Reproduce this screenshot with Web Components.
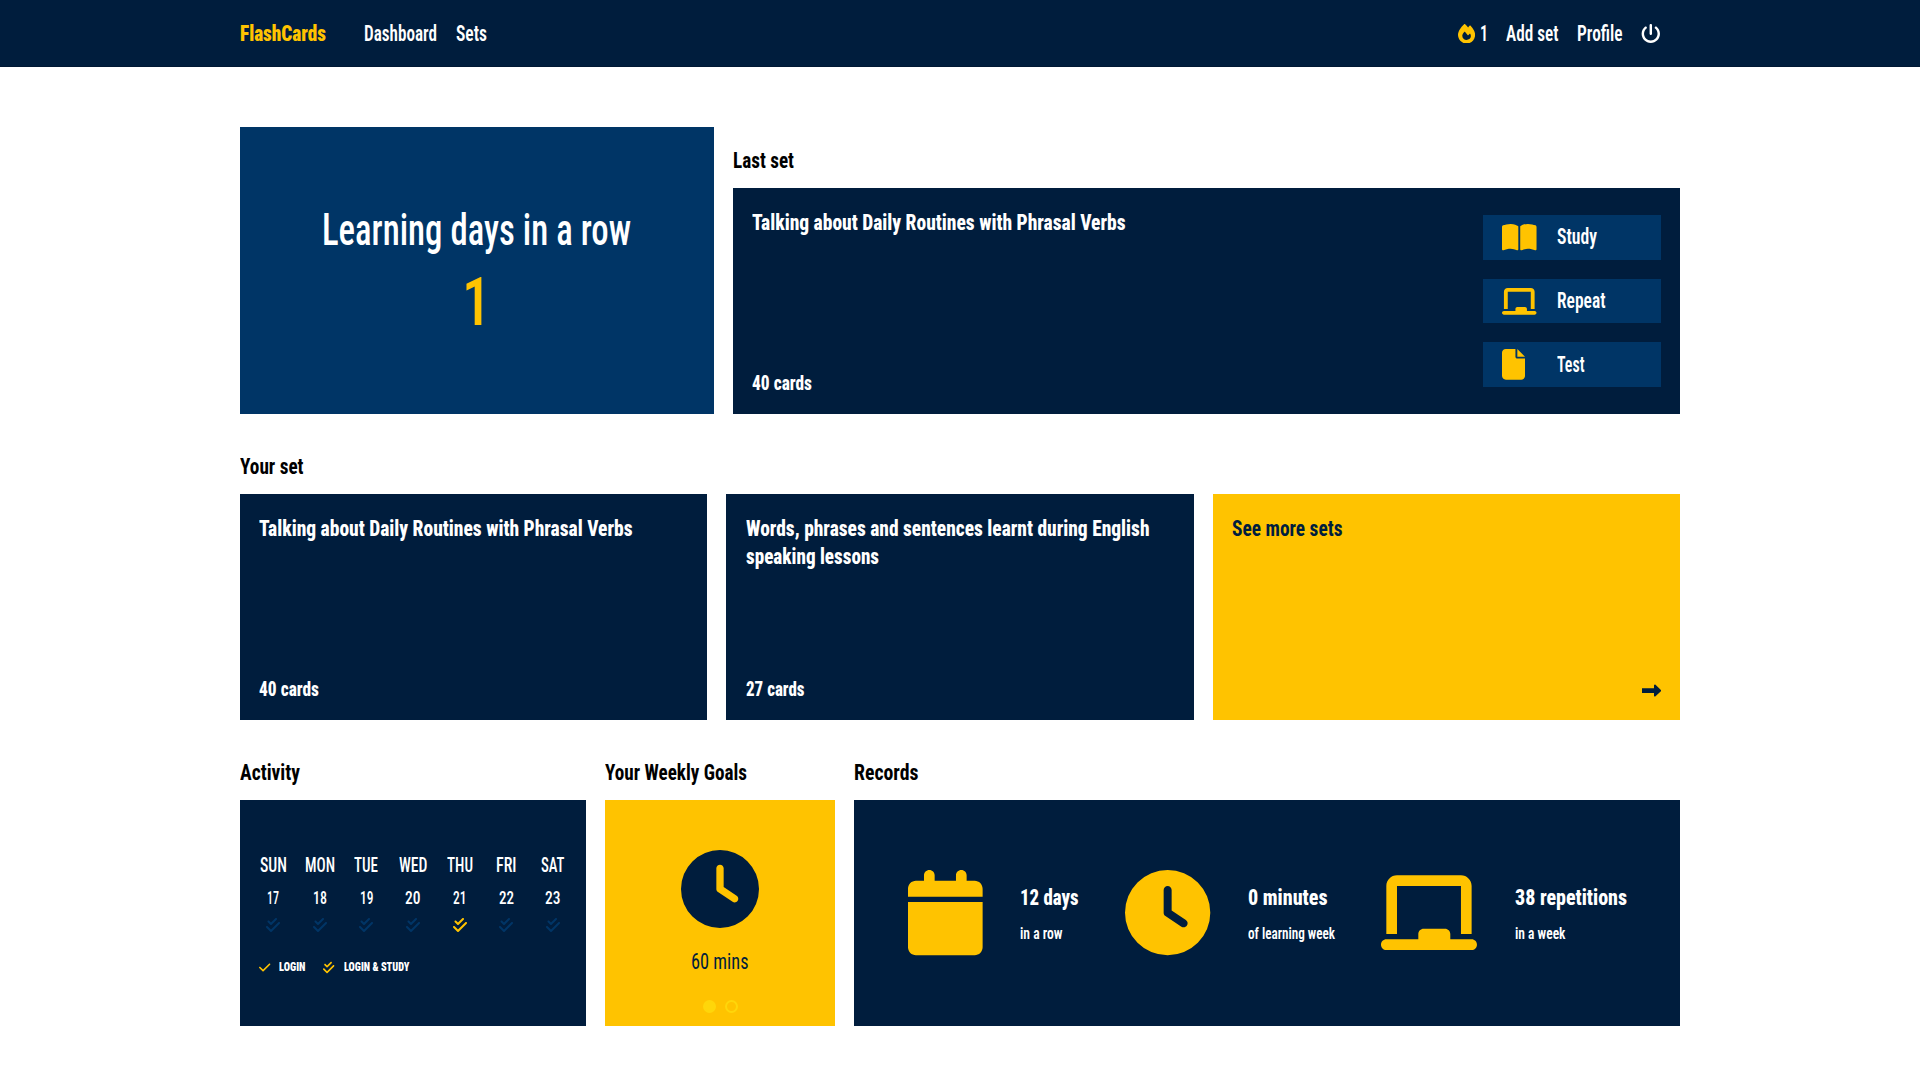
<!DOCTYPE html>
<html lang="en">
<head>
<meta charset="utf-8">
<title>FlashCards</title>
<style>
:root { --navy: #001d3d; --blue: #003566; --gold: #ffc300; --lemon: #ffd60a; }
body { margin: 0; background: #fff; color: #000; font-family: Roboto, "Liberation Sans Narrow", "Liberation Sans", sans-serif; font-stretch: 75%; }
</style>
</head>
<body>
<flash-app></flash-app>
<script>
const ICONS = {
  book: [576, "M249.6 471.5c10.8 3.8 22.4-4.1 22.4-15.5V78.6c0-4.2-1.6-8.4-5-11C247.4 52 202.4 32 144 32C93.5 32 46.3 45.3 18.1 56.1C6.8 60.5 0 71.7 0 83.8V454.1c0 11.9 12.8 20.2 24.1 16.5C55.6 460.1 105.5 448 144 448c33.9 0 79 14 105.6 23.5zm76.8 0C353 462 398.1 448 432 448c38.5 0 88.4 12.1 119.9 22.6c11.3 3.8 24.1-4.6 24.1-16.5V83.8c0-12.1-6.8-23.3-18.1-27.6C529.7 45.3 482.5 32 432 32c-58.4 0-103.4 20-123 35.6c-3.3 2.6-5 6.8-5 11V456c0 11.4 11.7 19.3 22.4 15.5z"],
  board: [576, "M96 32C60.7 32 32 60.7 32 96V384H96V96H480V384h64V96c0-35.3-28.7-64-64-64H96zM224 384v32H32c-17.7 0-32 14.3-32 32s14.3 32 32 32H544c17.7 0 32-14.3 32-32s-14.3-32-32-32H416V384c0-17.7-14.3-32-32-32H256c-17.7 0-32 14.3-32 32z"],
  file: [384, "M0 64C0 28.7 28.7 0 64 0H224V128c0 17.7 14.3 32 32 32H384V448c0 35.3-28.7 64-64 64H64c-35.3 0-64-28.7-64-64V64zm384 64H256V0L384 128z"],
  calendar: [448, "M96 32V64H48C21.5 64 0 85.5 0 112v48H448V112c0-26.5-21.5-48-48-48H352V32c0-17.7-14.3-32-32-32s-32 14.3-32 32V64H160V32c0-17.7-14.3-32-32-32S96 14.3 96 32zM448 192H0V464c0 26.5 21.5 48 48 48H400c26.5 0 48-21.5 48-48V192z"],
  clock: [512, "M256 0a256 256 0 1 1 0 512A256 256 0 1 1 256 0zM232 120V256c0 8 4 15.5 10.7 20l96 64c11 7.4 25.9 4.4 33.3-6.7s4.4-25.9-6.7-33.3L280 243.2V120c0-13.3-10.7-24-24-24s-24 10.7-24 24z"],
  arrow: [512, "M334.5 414c8.8 3.8 19 2 26-4.6l144-136c4.8-4.5 7.5-10.8 7.5-17.4s-2.7-12.9-7.5-17.4l-144-136c-7-6.6-17.2-8.4-26-4.6s-14.5 12.5-14.5 22l0 72H0V320H320l0 72c0 9.6 5.7 18.2 14.5 22z"],
  power: [512, "M288 32c0-17.7-14.3-32-32-32s-32 14.3-32 32V256c0 17.7 14.3 32 32 32s32-14.3 32-32V32zM143.5 120.6c13.6-11.3 15.4-31.5 4.1-45.1s-31.5-15.4-45.1-4.1C49.7 115.4 16 181.8 16 256c0 132.5 107.5 240 240 240s240-107.5 240-240c0-74.2-33.8-140.6-86.6-184.6c-13.6-11.3-33.8-9.4-45.1 4.1s-9.4 33.8 4.1 45.1c38.9 32.3 63.5 81 63.5 135.4c0 97.2-78.8 176-176 176s-176-78.8-176-176c0-54.4 24.7-103.1 63.5-135.4z"],
  check: [448, "M438.6 105.4c12.5 12.5 12.5 32.8 0 45.3l-256 256c-12.5 12.5-32.8 12.5-45.3 0l-128-128c-12.5-12.5-12.5-32.8 0-45.3s32.8-12.5 45.3 0L160 338.7 393.4 105.4c12.5-12.5 32.8-12.5 45.3 0z"],
  checks: [448, "M342.6 86.6c12.5-12.5 12.5-32.8 0-45.3s-32.8-12.5-45.3 0L160 178.7l-57.4-57.4c-12.5-12.5-32.8-12.5-45.3 0s-12.5 32.8 0 45.3l80 80c12.5 12.5 32.8 12.5 45.3 0l160-160zm96 128c12.5-12.5 12.5-32.8 0-45.3s-32.8-12.5-45.3 0L160 402.7 54.6 297.4c-12.5-12.5-32.8-12.5-45.3 0s-12.5 32.8 0 45.3l128 128c12.5 12.5 32.8 12.5 45.3 0l256-256z"],
  fire: [448, "M159.3 5.4c7.8-7.3 19.9-7.2 27.7 .1c27.6 25.9 53.5 53.8 77.7 84c11-14.4 23.5-30.1 37-42.9c7.9-7.4 20.1-7.4 28 .1c34.6 33 63.9 76.6 84.5 118c20.3 40.8 33.8 82.5 33.8 111.9C448 404.2 348.2 512 224 512C98.4 512 0 404.1 0 276.5c0-38.4 17.8-85.3 45.4-131.7C73.3 97.7 112.7 48.6 159.3 5.4zM225.7 416c25.3 0 47.7-7 68.8-21c42.1-29.4 53.4-88.2 28.1-134.4c-4.5-9-16-9.6-22.5-2l-25.2 29.3c-6.6 7.6-18.5 7.4-24.7-.5c-16.5-21-46-58.5-62.8-79.8c-6.3-8-18.3-8.1-24.7-.1c-33.8 42.5-50.8 69.3-50.8 99.4C112 375.4 162.6 416 225.7 416z"]
};

function define(name, html, ready) {
  const tpl = document.createElement("template");
  tpl.innerHTML = html;
  customElements.define(name, class extends HTMLElement {
    connectedCallback() {
      if (this.shadowRoot) return;
      this.attachShadow({ mode: "open" }).append(tpl.content.cloneNode(true));
      if (ready) ready(this, this.shadowRoot);
    }
  });
}

// Icon: name = glyph, size = glyph height in px.
define("ui-icon", `<style>:host{display:block;flex:none;line-height:0}svg{display:block;fill:currentColor}</style><svg><path/></svg>`, (el, root) => {
  const [w, d] = ICONS[el.getAttribute("name")], size = +el.getAttribute("size"), svg = root.querySelector("svg");
  svg.setAttribute("viewBox", `0 0 ${w} 512`);
  svg.setAttribute("width", size * w / 512);
  svg.setAttribute("height", size);
  svg.firstElementChild.setAttribute("d", d);
});

// Condensed one-line label: the text is narrowed to the width w.
define("ui-text", `<style>
:host{display:block;flex:none;height:28px;line-height:28px;white-space:nowrap;font-size:22.6px}
span{display:inline-block;transform-origin:0 50%}
</style><span><slot></slot></span>`, (el, root) => {
  const w = +el.getAttribute("w"), span = root.querySelector("span");
  const size = el.getAttribute("size"), lh = el.getAttribute("lh"), weight = el.getAttribute("weight");
  if (size) el.style.fontSize = size + "px";
  if (lh) el.style.height = el.style.lineHeight = lh + "px";
  if (weight) el.style.fontWeight = weight;
  el.style.width = w + "px";
  span.style.transform = `scaleX(${w / span.getBoundingClientRect().width})`;
});

define("nav-bar", `<style>
:host{display:block;background:var(--navy);color:#fff;height:66px;border-bottom:1px solid #001733}
nav{width:1440px;height:66px;margin:auto;display:flex;align-items:center;justify-content:space-between;box-sizing:border-box;padding-top:1px}
div{display:flex;align-items:center}
.links{gap:19px}.brand{color:var(--gold);margin-right:18.5px}
.streak{gap:4.5px}.streak ui-icon{color:var(--gold)}
.right{gap:18.5px;padding-right:19.2px}
</style>
<nav>
<div class="links"><ui-text class="brand" w="86" weight="900">FlashCards</ui-text><ui-text w="73" weight="600">Dashboard</ui-text><ui-text w="31" weight="600">Sets</ui-text></div>
<div class="links right"><div class="streak"><ui-icon name="fire" size="19.6"></ui-icon><ui-text w="8" weight="600">1</ui-text></div><ui-text w="52.5" weight="600">Add set</ui-text><ui-text w="45.5" weight="600">Profile</ui-text><ui-icon name="power" size="19.6"></ui-icon></div>
</nav>`);

define("panel-section", `<style>
:host{display:flex;flex-direction:column}
header{height:55px;display:flex;align-items:center;color:#000}
.card{height:226px;box-sizing:border-box;display:flex;background:var(--bg,var(--navy));color:var(--fg,#fff)}
</style><header><slot name="title"></slot></header><div class="card"><slot></slot></div>`);

define("set-card", `<style>
:host{display:flex;flex:1;flex-direction:column;justify-content:space-between;box-sizing:border-box;height:226px;padding:21px 19.2px 17px;background:var(--bg,var(--navy));color:var(--fg,#fff)}
.foot{display:flex;flex-direction:column}
</style><div><slot></slot></div><div class="foot"><slot name="foot"></slot></div>`);

define("action-button", `<style>
:host{display:flex;align-items:center;box-sizing:border-box;width:178px;height:44.5px;padding-left:19.2px;background:var(--blue);color:#fff}
.i{width:55.4px;color:var(--gold)}
</style><div class="i"></div><slot></slot>`, (el, root) => {
  root.querySelector(".i").innerHTML = `<ui-icon name="${el.getAttribute("icon")}" size="30.7"></ui-icon>`;
});

define("streak-card", `<style>
:host{display:flex;flex-direction:column;align-items:center;justify-content:center;box-sizing:border-box;width:473.6px;height:287px;padding-top:3px;background:var(--blue);color:#fff}
.n{color:var(--gold)}
</style><ui-text w="309" size="45" lh="59" weight="500">Learning days in a row</ui-text><ui-text class="n" w="29" size="67" lh="86" weight="500">1</ui-text>`);

define("activity-week", `<style>
:host{display:block;width:346px;box-sizing:border-box;padding:51px 10px 0}
.days{display:grid;grid-template-columns:repeat(7,46.6px);justify-items:center}
.n{margin-top:7px}.c{margin-top:7px;color:#003566}.on{color:var(--gold)}
.legend{display:flex;align-items:center;height:16px;margin:26px 0 0 9.3px}
.legend ui-icon{color:var(--gold)}.legend ui-text{margin:0 17.5px 0 8.8px}
</style><div class="days"></div>
<div class="legend"><ui-icon name="check" size="13"></ui-icon><ui-text w="26.5" size="12.6" lh="16" weight="900">LOGIN</ui-text><ui-icon name="checks" size="13"></ui-icon><ui-text w="65.5" size="12.6" lh="16" weight="900">LOGIN &amp; STUDY</ui-text></div>`, (el, root) => {
  const days = [["SUN", 27, 17, 12], ["MON", 30, 18, 14], ["TUE", 24, 19, 13.5], ["WED", 28.5, 20, 15.5], ["THU", 26, 21, 13.5], ["FRI", 20.5, 22, 15], ["SAT", 23.5, 23, 15.5]];
  root.querySelector(".days").innerHTML =
    days.map(d => `<ui-text w="${d[1]}" size="20.5" weight="500">${d[0]}</ui-text>`).join("") +
    days.map(d => `<ui-text class="n" w="${d[3]}" size="17.5" lh="24" weight="500">${d[2]}</ui-text>`).join("") +
    days.map(d => `<ui-icon class="c${d[2] === 21 ? " on" : ""}" name="checks" size="16"></ui-icon>`).join("");
});

define("weekly-goal", `<style>
:host{display:flex;flex-direction:column;align-items:center;width:230px;padding-top:50px;box-sizing:border-box}
ui-text{margin:19.5px 0 24.5px}
.dots{display:flex;gap:9px}i{box-sizing:border-box;width:13px;height:13px;border-radius:50%;border:2px solid var(--lemon)}i:first-child{background:var(--lemon)}
</style><ui-icon name="clock" size="78"></ui-icon><ui-text w="57.5" weight="400">60 mins</ui-text><div class="dots"><i></i><i></i></div>`);

define("record-item", `<style>
:host{display:flex;align-items:center;gap:37.4px}.i{color:var(--gold)}
.t{display:flex;flex-direction:column;gap:7.5px;margin-top:6px}
</style><div class="i"></div><div class="t"><slot></slot></div>`, (el, root) => {
  root.querySelector(".i").innerHTML = `<ui-icon name="${el.getAttribute("icon")}" size="85.3"></ui-icon>`;
});

define("flash-app", `<style>
:host{display:block}
main{width:1440px;margin:auto;padding-top:60px}
.row{display:flex;gap:19.2px}
.row+.row{margin-top:25px}
.top{align-items:flex-end}
.grow{flex:1}
.plain{--bg:transparent}.plain set-card{--bg:var(--navy)}
.sets{display:flex;gap:19.2px;width:1440px}
.goal{--bg:var(--gold);--fg:var(--navy)}
.sets .more{--bg:var(--gold);--fg:var(--navy)}
.more ui-icon{align-self:flex-end;margin-bottom:2.5px}
.actions{display:flex;flex-direction:column;justify-content:center;gap:19.2px;padding-right:19.2px}
.records{display:flex;align-items:center;gap:46.4px;padding-left:54px}
</style>
<nav-bar></nav-bar>
<main>
<div class="row top"><streak-card></streak-card>
<panel-section class="grow"><ui-text slot="title" w="61" weight="700">Last set</ui-text>
<set-card><ui-text w="373.5" weight="800">Talking about Daily Routines with Phrasal Verbs</ui-text><ui-text slot="foot" w="60" size="20.2" weight="800">40 cards</ui-text></set-card>
<div class="actions"><action-button icon="book"><ui-text w="40" weight="600">Study</ui-text></action-button><action-button icon="board"><ui-text w="48.5" weight="600">Repeat</ui-text></action-button><action-button icon="file"><ui-text w="27.5" weight="600">Test</ui-text></action-button></div>
</panel-section></div>
<div class="row"><panel-section class="plain"><ui-text slot="title" w="63.5" weight="700">Your set</ui-text>
<div class="sets">
<set-card><ui-text w="373.5" weight="800">Talking about Daily Routines with Phrasal Verbs</ui-text><ui-text slot="foot" w="60" size="20.2" weight="800">40 cards</ui-text></set-card>
<set-card><ui-text w="403.5" weight="800">Words, phrases and sentences learnt during English</ui-text><ui-text w="133" weight="800">speaking lessons</ui-text><ui-text slot="foot" w="58.5" size="20.2" weight="800">27 cards</ui-text></set-card>
<set-card class="more"><ui-text w="110.5" weight="700">See more sets</ui-text><ui-icon slot="foot" name="arrow" size="19.2"></ui-icon></set-card>
</div></panel-section></div>
<div class="row">
<panel-section><ui-text slot="title" w="60" weight="700">Activity</ui-text><activity-week></activity-week></panel-section>
<panel-section class="goal"><ui-text slot="title" w="142" weight="700">Your Weekly Goals</ui-text><weekly-goal></weekly-goal></panel-section>
<panel-section class="grow"><ui-text slot="title" w="64.5" weight="700">Records</ui-text>
<div class="records">
<record-item icon="calendar"><ui-text w="58.5" weight="800">12 days</ui-text><ui-text w="42.5" size="16.4" weight="600">in a row</ui-text></record-item>
<record-item icon="clock"><ui-text w="79.5" weight="800">0 minutes</ui-text><ui-text w="87" size="16.4" weight="600">of learning week</ui-text></record-item>
<record-item icon="board"><ui-text w="112" weight="800">38 repetitions</ui-text><ui-text w="50.5" size="16.4" weight="600">in a week</ui-text></record-item>
</div></panel-section>
</div>
</main>`);
</script>
</body>
</html>
